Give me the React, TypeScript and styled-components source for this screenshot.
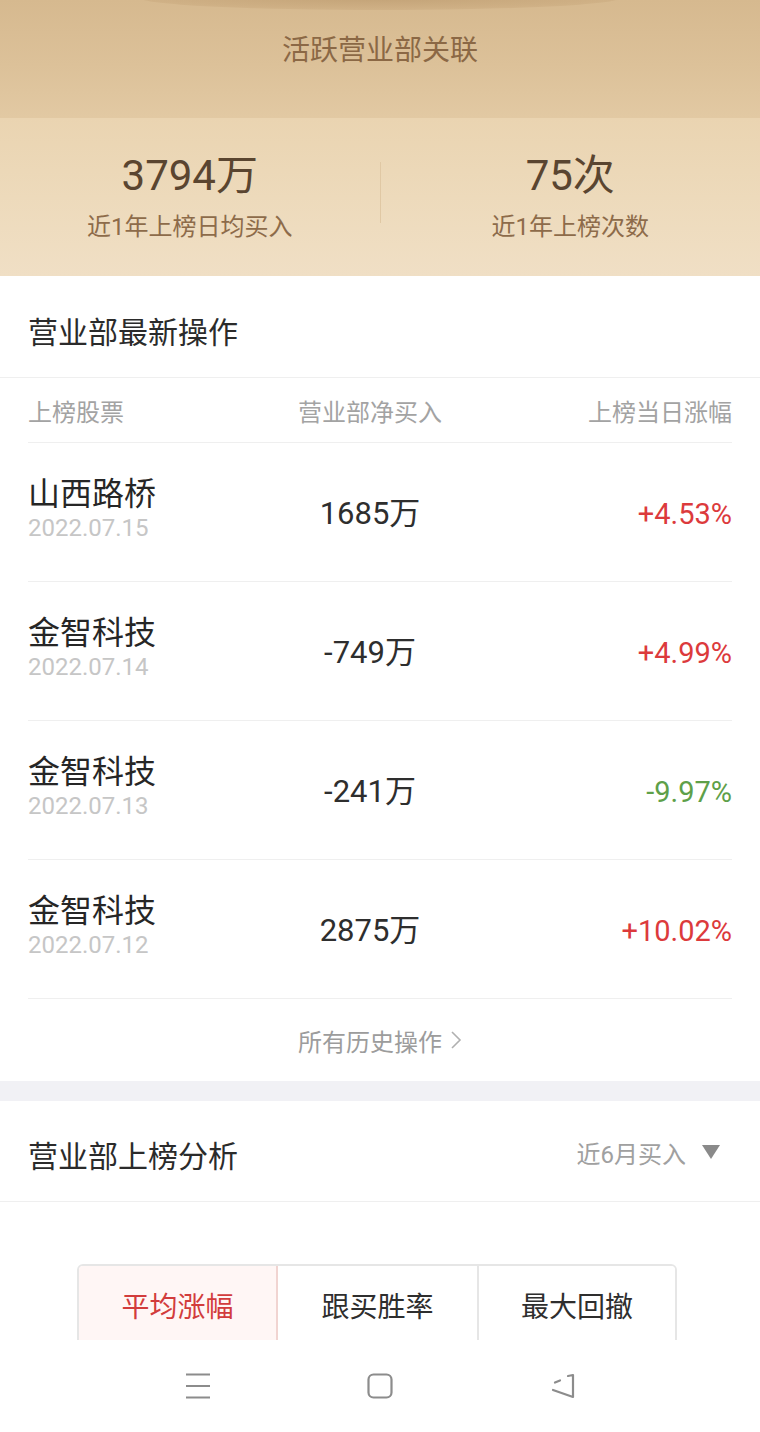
import React from "react";
import styled, { createGlobalStyle } from "styled-components";

const GlobalStyle = createGlobalStyle`
  html, body { margin: 0; padding: 0; background: #ffffff; }
  body { font-family: Roboto, "Noto Sans CJK SC", "Noto Sans", sans-serif; -webkit-font-smoothing: antialiased; }
  * { box-sizing: border-box; }
`;

const Screen = styled.div`
  width: 760px;
  height: 1432px;
  display: flex;
  flex-direction: column;
  overflow: hidden;
  background: #fff;
`;

const Content = styled.div`
  flex: 1;
  min-height: 0;
  overflow: hidden;
`;

const TopBand = styled.div`
  position: relative;
  height: 118px;
  display: flex;
  justify-content: center;
  padding-top: 29px;
  background: linear-gradient(180deg, #d6b98f 0%, #dcc199 55%, #e2c9a3 100%);
  &::before {
    content: "";
    position: absolute;
    left: 140px;
    right: 140px;
    top: -14px;
    height: 24px;
    border-radius: 50%;
    background: radial-gradient(ellipse at center, rgba(180, 145, 100, 0.55) 0%, rgba(190, 155, 110, 0.35) 60%, rgba(200, 165, 120, 0) 100%);
  }
`;

const HeroTitle = styled.div`
  position: relative;
  font-size: 28px;
  line-height: 38px;
  color: #8b6845;
  font-family: "Noto Sans CJK SC", sans-serif;
`;

const StatsBand = styled.div`
  height: 158px;
  display: grid;
  grid-template-columns: 1fr 1px 1fr;
  background: linear-gradient(180deg, #ead4b1 0%, #eddabb 50%, #f0dfc5 100%);
`;

const Stat = styled.div`
  display: flex;
  flex-direction: column;
  align-items: center;
  padding-top: 33px;
`;

const StatValue = styled.div`
  font-size: 42px;
  line-height: 50px;
  color: #5a4530;
  font-family: Roboto, "Noto Sans CJK SC", sans-serif;
`;

const StatLabel = styled.div`
  margin-top: 10px;
  font-size: 24px;
  line-height: 32px;
  color: #8d6b4a;
  font-family: Roboto, "Noto Sans CJK SC", sans-serif;
`;

const VDivider = styled.div`
  align-self: start;
  margin-top: 44px;
  height: 61px;
  background: #e0c8a4;
`;

const SectionHead = styled.div<{ $h: number; $pt: number }>`
  height: ${(p) => p.$h}px;
  padding: ${(p) => p.$pt}px 40px 0 28px;
  display: flex;
  align-items: center;
  justify-content: space-between;
  border-bottom: 1px solid #efefef;
`;

const SectionTitle = styled.div`
  font-size: 30px;
  line-height: 40px;
  color: #2b2b2b;
  font-family: "Noto Sans CJK SC", sans-serif;
`;

const Table = styled.div`
  padding: 0 28px;
`;

const Grid = styled.div<{ $h: number }>`
  height: ${(p) => p.$h}px;
  display: grid;
  grid-template-columns: 240px 204px 1fr;
  align-items: center;
  border-bottom: 1px solid #efefef;
`;

const HeadCell = styled.div<{ $align: string }>`
  text-align: ${(p) => p.$align};
  font-size: 24px;
  line-height: 32px;
  color: #a3a3a3;
  font-family: "Noto Sans CJK SC", sans-serif;
  padding-top: 2px;
`;

const NameBlock = styled.div`
  display: flex;
  flex-direction: column;
  margin-top: -9px;
`;

const StockName = styled.div`
  font-size: 32px;
  line-height: 34px;
  color: #262626;
  font-family: "Noto Sans CJK SC", sans-serif;
`;

const StockDate = styled.div`
  margin-top: 6px;
  font-size: 24px;
  line-height: 28px;
  color: #c6c6c6;
  font-family: Roboto, sans-serif;
`;

const Amount = styled.div`
  text-align: center;
  font-size: 31px;
  line-height: 36px;
  color: #2e2e2e;
  font-family: Roboto, "Noto Sans CJK SC", sans-serif;
  margin-top: 3px;
`;

const Change = styled.div<{ $up: boolean }>`
  text-align: right;
  font-size: 29px;
  line-height: 36px;
  color: ${(p) => (p.$up ? "#dc3a3c" : "#5ea049")};
  font-family: Roboto, sans-serif;
  margin-top: 3px;
`;

const MoreLink = styled.div`
  height: 82px;
  display: flex;
  align-items: center;
  justify-content: center;
  gap: 8px;
  font-size: 24px;
  color: #9c9c9c;
  font-family: "Noto Sans CJK SC", sans-serif;
`;

const GrayGap = styled.div`
  height: 20px;
  background: #f1f1f5;
`;

const Picker = styled.div`
  display: flex;
  align-items: center;
  gap: 16px;
  font-size: 24px;
  color: #a0a0a0;
  font-family: Roboto, "Noto Sans CJK SC", sans-serif;
  margin-top: -4px;
`;

const Tabs = styled.div`
  margin: 62px 0 0 77px;
  width: 600px;
  height: 90px;
  display: grid;
  grid-template-columns: 199px 201px 1fr;
  border: 2px solid #e6e6e6;
  border-radius: 6px 6px 0 0;
  overflow: hidden;
`;

const Tab = styled.div<{ $active?: boolean }>`
  display: flex;
  justify-content: center;
  padding-top: 20px;
  font-size: 28px;
  line-height: 38px;
  font-family: "Noto Sans CJK SC", sans-serif;
  color: ${(p) => (p.$active ? "#d23c3c" : "#2e2e2e")};
  background: ${(p) => (p.$active ? "#fff6f5" : "#ffffff")};
  border-right: 2px solid ${(p) => (p.$active ? "#f1d4d1" : "#e6e6e6")};
  &:last-child { border-right: none; }
`;

const NavBar = styled.div`
  height: 92px;
  flex-shrink: 0;
  background: #ffffff;
  display: flex;
  align-items: center;
  justify-content: center;
  gap: 156px;
`;

const NavIcon = styled.svg`
  width: 26px;
  height: 26px;
  display: block;
`;

const rows = [
  { name: "山西路桥", date: "2022.07.15", amount: "1685万", change: "+4.53%", up: true },
  { name: "金智科技", date: "2022.07.14", amount: "-749万", change: "+4.99%", up: true },
  { name: "金智科技", date: "2022.07.13", amount: "-241万", change: "-9.97%", up: false },
  { name: "金智科技", date: "2022.07.12", amount: "2875万", change: "+10.02%", up: true },
];

export default function App() {
  return (
    <>
      <GlobalStyle />
      <Screen>
        <Content>
          <TopBand>
            <HeroTitle>活跃营业部关联</HeroTitle>
          </TopBand>
          <StatsBand>
            <Stat>
              <StatValue>3794万</StatValue>
              <StatLabel>近1年上榜日均买入</StatLabel>
            </Stat>
            <VDivider />
            <Stat>
              <StatValue>75次</StatValue>
              <StatLabel>近1年上榜次数</StatLabel>
            </Stat>
          </StatsBand>

          <SectionHead $h={102} $pt={6}>
            <SectionTitle>营业部最新操作</SectionTitle>
          </SectionHead>
          <Table>
            <Grid $h={65}>
              <HeadCell $align="left">上榜股票</HeadCell>
              <HeadCell $align="center">营业部净买入</HeadCell>
              <HeadCell $align="right">上榜当日涨幅</HeadCell>
            </Grid>
            {rows.map((r, i) => (
              <Grid $h={139} key={i}>
                <NameBlock>
                  <StockName>{r.name}</StockName>
                  <StockDate>{r.date}</StockDate>
                </NameBlock>
                <Amount>{r.amount}</Amount>
                <Change $up={r.up}>{r.change}</Change>
              </Grid>
            ))}
          </Table>
          <MoreLink>
            <span>所有历史操作</span>
            <svg width="12" height="20" viewBox="0 0 12 20">
              <path d="M2 2 L10 10 L2 18" fill="none" stroke="#b0b0b0" strokeWidth="1.6" />
            </svg>
          </MoreLink>
          <GrayGap />
          <SectionHead $h={101} $pt={6}>
            <SectionTitle>营业部上榜分析</SectionTitle>
            <Picker>
              <span>近6月买入</span>
              <svg width="18" height="16" viewBox="0 0 18 16">
                <path d="M0 1 L18 1 L9 15 Z" fill="#8a8a8a" />
              </svg>
            </Picker>
          </SectionHead>
          <Tabs>
            <Tab $active>平均涨幅</Tab>
            <Tab>跟买胜率</Tab>
            <Tab>最大回撤</Tab>
          </Tabs>
        </Content>
        <NavBar>
          <NavIcon viewBox="0 0 26 26">
            <path d="M1 1.5 H25 M1 13 H25 M1 24.5 H25" stroke="#8c8c8c" strokeWidth="2.2" fill="none" />
          </NavIcon>
          <NavIcon viewBox="0 0 26 26">
            <rect x="1.5" y="1.5" width="23" height="23" rx="5" stroke="#8c8c8c" strokeWidth="2.2" fill="none" />
          </NavIcon>
          <NavIcon viewBox="0 0 26 26">
            <path
              d="M19 3 L24 2 L24 24 L4 17 M6 9.5 L11 7.5"
              stroke="#8c8c8c"
              strokeWidth="2.2"
              fill="none"
              strokeLinecap="round"
              strokeLinejoin="round"
            />
          </NavIcon>
        </NavBar>
      </Screen>
    </>
  );
}
